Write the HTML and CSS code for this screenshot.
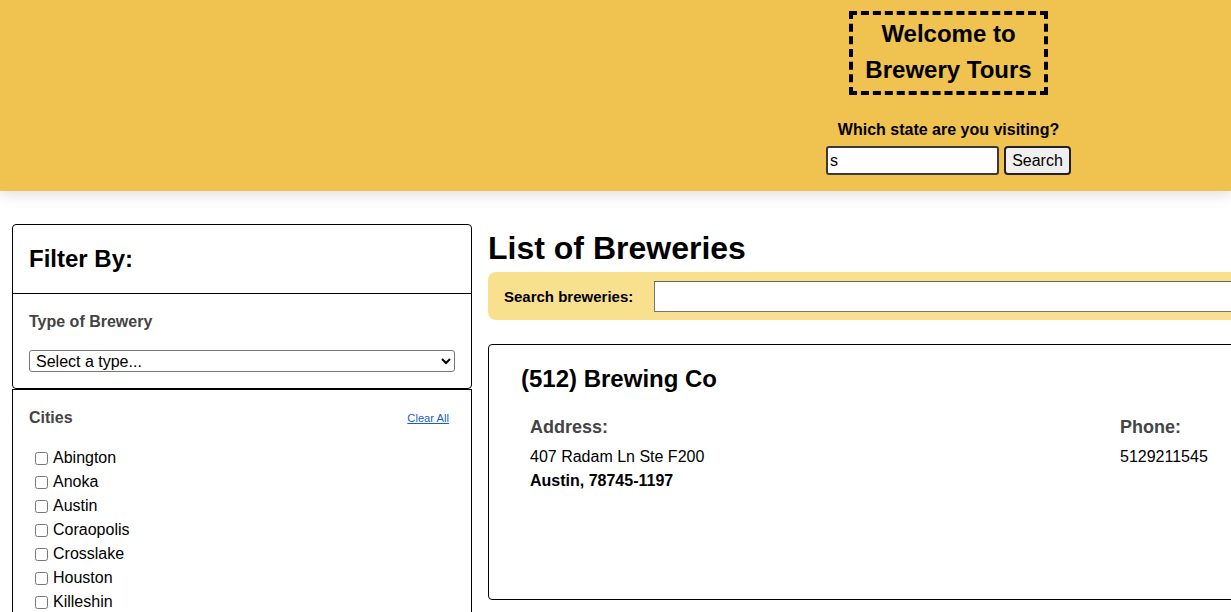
FILE: index.html
```html
<!DOCTYPE html>
<html lang="en">
<head>
<meta charset="utf-8">
<title>Brewery Tours</title>
<link rel="stylesheet" href="styles.css">
</head>
<body>
<header class="site-header">
  <div class="welcome">
    <h1 class="welcome-title">Welcome to<br>Brewery Tours</h1>
    <form class="state-form">
      <label class="state-label" for="state">Which state are you visiting?</label>
      <div class="state-row">
        <input id="state" class="state-input" type="text" value="s">
        <button class="state-btn" type="button">Search</button>
      </div>
    </form>
  </div>
</header>
<div class="layout">
  <aside class="sidebar">
    <div class="filter-box">
      <div class="filter-head"><h2 class="filter-title">Filter By:</h2></div>
      <div class="filter-type">
        <h3 class="filter-label">Type of Brewery</h3>
        <select class="type-select">
          <option>Select a type...</option>
          <option>micro</option>
          <option>regional</option>
          <option>brewpub</option>
        </select>
      </div>
    </div>
    <div class="cities-box">
      <div class="cities-head">
        <h3 class="filter-label">Cities</h3>
        <a class="clear-link" href="#">Clear All</a>
      </div>
      <ul class="city-list">
        <li><label class="city"><input type="checkbox">Abington</label></li>
        <li><label class="city"><input type="checkbox">Anoka</label></li>
        <li><label class="city"><input type="checkbox">Austin</label></li>
        <li><label class="city"><input type="checkbox">Coraopolis</label></li>
        <li><label class="city"><input type="checkbox">Crosslake</label></li>
        <li><label class="city"><input type="checkbox">Houston</label></li>
        <li><label class="city"><input type="checkbox">Killeshin</label></li>
        <li><label class="city"><input type="checkbox">Lakeville</label></li>
      </ul>
    </div>
  </aside>
  <main class="main">
    <h1 class="list-title">List of Breweries</h1>
    <div class="search-bar">
      <label class="search-label" for="search">Search breweries:</label>
      <input id="search" class="search-input" type="text">
    </div>
    <article class="card">
      <h2 class="card-title">(512) Brewing Co</h2>
      <div class="card-details">
        <section class="detail">
          <h3 class="detail-label">Address:</h3>
          <p class="detail-line">407 Radam Ln Ste F200</p>
          <p class="detail-line detail-strong">Austin, 78745-1197</p>
        </section>
        <section class="detail">
          <h3 class="detail-label">Phone:</h3>
          <p class="detail-line">5129211545</p>
        </section>
      </div>
    </article>
  </main>
</div>
</body>
</html>
```

FILE: styles.css
```css
* { box-sizing: border-box; }
html, body { margin: 0; padding: 0; }
body {
  font-family: "Liberation Sans", Arial, Helvetica, sans-serif;
  color: #000;
  background: #fff;
  overflow-x: hidden;
}

/* Header */
.site-header {
  background: #f0c24f;
  height: 191px;
  display: flex;
  justify-content: flex-end;
  padding: 11px 160px 0 0;
  box-shadow: 0 3px 14px rgba(0, 0, 0, 0.14);
}
.welcome {
  width: 245px;
  display: flex;
  flex-direction: column;
  align-items: center;
}
.welcome-title {
  margin: 0;
  font-size: 24px;
  line-height: 36px;
  font-weight: bold;
  text-align: center;
  border: 4px dashed #000;
  padding: 1px 12px 3px;
}
.state-form {
  display: flex;
  flex-direction: column;
  align-items: center;
  margin-top: 26px;
}
.state-label {
  font-weight: bold;
  font-size: 16px;
  line-height: 18px;
}
.state-row {
  display: flex;
  gap: 5px;
  margin-top: 7px;
}
.state-input {
  width: 173px;
  height: 29px;
  border: 2px solid #3a3a3a;
  border-radius: 3px;
  padding: 0 2px;
  font: 16px "Liberation Sans", Arial, sans-serif;
  background: #fff;
}
.state-btn {
  width: 67px;
  height: 29px;
  border: 2px solid #222;
  border-radius: 4px;
  background: #efefef;
  font: 16px "Liberation Sans", Arial, sans-serif;
  color: #000;
  padding: 0;
}

/* Layout */
.layout {
  display: flex;
  gap: 16px;
  padding: 33px 0 0 12px;
  overflow: hidden;
}
.sidebar {
  flex: 0 0 460px;
  width: 460px;
}
.filter-box {
  border: 1px solid #000;
  border-radius: 4px;
}
.filter-head {
  padding: 0 16px;
  border-bottom: 1px solid #000;
}
.filter-title {
  margin: 0;
  padding: 20px 0 21px;
  font-size: 24px;
  line-height: 27px;
}
.filter-type {
  padding: 19px 16px 16px;
}
.filter-label {
  margin: 0;
  font-size: 16px;
  line-height: 18px;
  color: #444;
}
.filter-type .filter-label { margin-bottom: 19px; }
.type-select {
  display: block;
  width: 426px;
  height: 22px;
  font: 16px "Liberation Sans", Arial, sans-serif;
  border: 1px solid #767676;
  border-radius: 3px;
  background: #fff;
  color: #000;
  padding: 0 2px;
}
.cities-box {
  border: 1px solid #000;
  padding: 19px 22px 16px 16px;
  min-height: 400px;
}
.cities-head {
  display: flex;
  justify-content: space-between;
  align-items: center;
}
.clear-link {
  font-size: 11.2px;
  color: #1a5fc8;
  text-decoration: underline;
}
.city-list {
  list-style: none;
  margin: 19px 0 0;
  padding: 0 0 0 2px;
}
.city-list li { line-height: 24px; }
.city {
  display: flex;
  align-items: center;
  font-size: 16px;
}
.city input {
  margin: 0 5px 0 4px;
  width: 13px;
  height: 13px;
}

/* Main */
.main {
  flex: 0 0 1500px;
  width: 1500px;
}
.list-title {
  margin: 6px 0 5px 0;
  font-size: 32px;
  line-height: 37px;
}
.search-bar {
  display: flex;
  align-items: center;
  gap: 21px;
  background: #f9e08f;
  border-radius: 8px;
  padding: 8px 16px;
  height: 48px;
}
.search-label {
  font-weight: bold;
  font-size: 15px;
}
.search-input {
  flex: 1;
  height: 31px;
  border: 1px solid #767676;
  border-top-color: #666;
  border-radius: 0;
  background: #fff;
  font: 16px "Liberation Sans", Arial, sans-serif;
}
.card {
  margin-top: 24px;
  border: 1px solid #000;
  border-radius: 4px;
  padding: 20px 32px;
  min-height: 256px;
}
.card-title {
  margin: 0;
  font-size: 24px;
  line-height: 28px;
}
.card-details {
  display: grid;
  grid-template-columns: 590px auto;
  padding-left: 9px;
  margin-top: 24px;
}
.detail-label {
  margin: 0 0 7px;
  font-size: 18px;
  line-height: 21px;
  color: #444;
}
.detail-line {
  margin: 0;
  font-size: 16px;
  line-height: 24px;
}
.detail-strong { font-weight: bold; }
```
